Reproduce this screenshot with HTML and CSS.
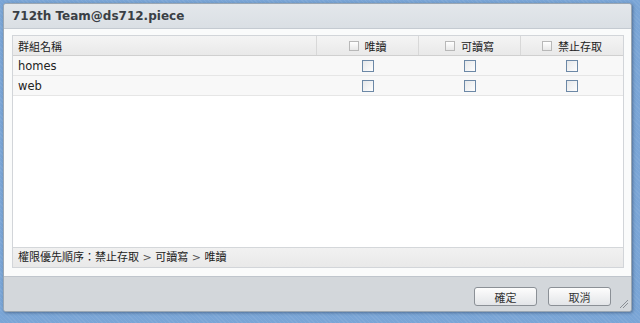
FILE: index.html
```html
<!DOCTYPE html>
<html>
<head>
<meta charset="utf-8">
<link rel="stylesheet" href="styles.css">
</head>
<body>
<div class="dialog">
  <div class="title">712th Team@ds712.piece</div>
  <div class="body">
    <div class="grid">
      <div class="row head">
        <div class="c name">群組名稱</div>
        <div class="c col"><span class="hcb"></span>唯讀</div>
        <div class="c col"><span class="hcb"></span>可讀寫</div>
        <div class="c col last"><span class="hcb"></span>禁止存取</div>
      </div>
      <div class="row">
        <div class="c name">homes</div>
        <div class="c col"><span class="cb"></span></div>
        <div class="c col"><span class="cb"></span></div>
        <div class="c col last"><span class="cb"></span></div>
      </div>
      <div class="row">
        <div class="c name">web</div>
        <div class="c col"><span class="cb"></span></div>
        <div class="c col"><span class="cb"></span></div>
        <div class="c col last"><span class="cb"></span></div>
      </div>
      <div class="empty"></div>
      <div class="note">權限優先順序：禁止存取 <span class="gt">&gt;</span> 可讀寫 <span class="gt">&gt;</span> 唯讀</div>
    </div>
  </div>
  <div class="foot">
    <button class="btn">確定</button>
    <button class="btn">取消</button>
    <span class="grip"></span>
  </div>
</div>
</body>
</html>
```

FILE: styles.css
```css
html, body {
  margin: 0;
  padding: 0;
  width: 640px;
  height: 323px;
  overflow: hidden;
}
body {
  background-color: #7aa5d6;
  background-image: repeating-linear-gradient(45deg, rgba(255,255,255,0.06) 0 1px, transparent 1px 3px);
  font-family: "DejaVu Sans", "Noto Sans CJK TC", sans-serif;
  font-size: 11px;
  color: #222;
  padding: 3px 0 0 3px;
  box-sizing: border-box;
}
.dialog {
  width: 629px;
  height: 309px;
  display: flex;
  flex-direction: column;
  border: 1px solid #9aa6b2;
  border-radius: 3px;
  background: #d4d8dd;
  box-shadow: 1px 1px 3px rgba(40,60,90,0.5);
  box-sizing: border-box;
  overflow: hidden;
  position: relative;
}
.title {
  height: 24px;
  line-height: 24px;
  padding-left: 8px;
  font-weight: bold;
  font-size: 12px;
  color: #3a3f45;
  background: linear-gradient(#e3e7eb, #dadfe4);
  border-bottom: 1px solid #c4cad1;
  font-family: "DejaVu Sans", sans-serif;
}
.body {
  background: #fafbfb;
  padding: 6px 7px 8px 8px;
  height: 248px;
  box-sizing: border-box;
  border-bottom: 1px solid #bfc5cc;
}
.grid {
  height: 100%;
  border: 1px solid #d2d5d9;
  display: flex;
  flex-direction: column;
  background: #fff;
  box-sizing: border-box;
}
.row {
  display: flex;
  height: 20px;
  background: #f8f8f8;
  border-bottom: 1px solid #e6e6e6;
  box-sizing: border-box;
  align-items: center;
}
.row.head {
  background: linear-gradient(#f4f4f4, #e9e9e9);
  border-bottom: 1px solid #d0d0d0;
}
.c {
  height: 100%;
  display: flex;
  align-items: center;
  box-sizing: border-box;
}
.name {
  width: 304px;
  padding-left: 5px;
}
.row:not(.head) .name { font-size: 11.5px; }
.col {
  width: 102px;
  justify-content: center;
}
.head .c { border-right: 1px solid #d8d8d8; }
.head .c.last { border-right: none; }
.hcb {
  display: inline-block;
  width: 8px;
  height: 8px;
  border: 1px solid #b8b8b8;
  background: linear-gradient(#fff, #e8e8e8);
  margin-right: 6px;
}
.cb {
  display: inline-block;
  width: 10px;
  height: 10px;
  border: 1px solid #6c88a6;
  background: linear-gradient(135deg, #e6e8ea, #fdfdfd);
}
.empty { flex: 1; background: #fff; }
.note {
  height: 19px;
  line-height: 19px;
  border-top: 1px solid #d4d7da;
  background: linear-gradient(#f1f1f1, #e9e9e9);
  padding-left: 5px;
  font-size: 11px;
}
.gt { color: #555; }
.foot {
  flex: 1;
  display: flex;
  justify-content: flex-end;
  align-items: flex-start;
  padding: 10px 20px 0 0;
  gap: 11px;
  background: #d3d7db;
}
.btn {
  width: 63px;
  height: 19px;
  border: 1px solid #8b9096;
  border-radius: 3px;
  background: linear-gradient(#fdfdfd, #e3e5e8);
  font-family: "DejaVu Sans", "Noto Sans CJK TC", sans-serif;
  font-size: 11px;
  color: #333;
  padding: 0;
}
.grip {
  position: absolute;
  right: 3px;
  bottom: 3px;
  width: 8px;
  height: 8px;
  background: linear-gradient(135deg, transparent 45%, #8a8f95 45% 52%, transparent 52% 68%, #8a8f95 68% 75%, transparent 75%);
}
```
